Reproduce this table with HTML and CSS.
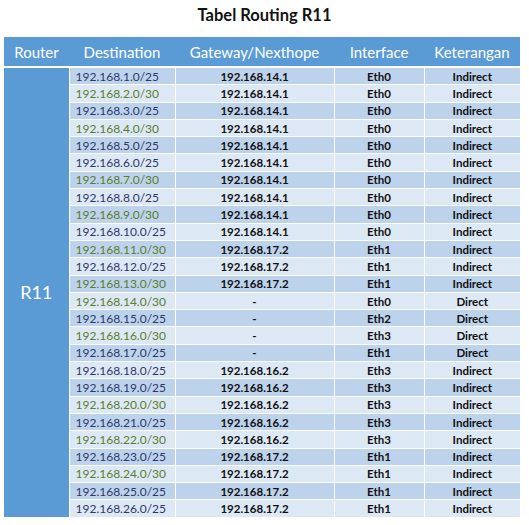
FILE: index.html
```html
<!DOCTYPE html>
<html>
<head>
<meta charset="utf-8">
<link rel="stylesheet" href="styles.css">
</head>
<body>
<h1 class="title">Tabel Routing R11</h1>
<table class="rt">
<colgroup>
<col class="c1"><col class="c2"><col class="c3"><col class="c4"><col class="c5">
</colgroup>
<thead>
<tr><th>Router</th><th>Destination</th><th>Gateway/Nexthope</th><th>Interface</th><th>Keterangan</th></tr>
</thead>
<tbody>
<tr class="d"><td class="router" rowspan="26">R11</td><td class="dst n">192.168.1.0/25</td><td>192.168.14.1</td><td>Eth0</td><td>Indirect</td></tr>
<tr class="l"><td class="dst g">192.168.2.0/30</td><td>192.168.14.1</td><td>Eth0</td><td>Indirect</td></tr>
<tr class="d"><td class="dst n">192.168.3.0/25</td><td>192.168.14.1</td><td>Eth0</td><td>Indirect</td></tr>
<tr class="l"><td class="dst g">192.168.4.0/30</td><td>192.168.14.1</td><td>Eth0</td><td>Indirect</td></tr>
<tr class="d"><td class="dst n">192.168.5.0/25</td><td>192.168.14.1</td><td>Eth0</td><td>Indirect</td></tr>
<tr class="l"><td class="dst n">192.168.6.0/25</td><td>192.168.14.1</td><td>Eth0</td><td>Indirect</td></tr>
<tr class="d"><td class="dst g">192.168.7.0/30</td><td>192.168.14.1</td><td>Eth0</td><td>Indirect</td></tr>
<tr class="l"><td class="dst n">192.168.8.0/25</td><td>192.168.14.1</td><td>Eth0</td><td>Indirect</td></tr>
<tr class="d"><td class="dst g">192.168.9.0/30</td><td>192.168.14.1</td><td>Eth0</td><td>Indirect</td></tr>
<tr class="l"><td class="dst n">192.168.10.0/25</td><td>192.168.14.1</td><td>Eth0</td><td>Indirect</td></tr>
<tr class="d"><td class="dst g">192.168.11.0/30</td><td>192.168.17.2</td><td>Eth1</td><td>Indirect</td></tr>
<tr class="l"><td class="dst n">192.168.12.0/25</td><td>192.168.17.2</td><td>Eth1</td><td>Indirect</td></tr>
<tr class="d"><td class="dst g">192.168.13.0/30</td><td>192.168.17.2</td><td>Eth1</td><td>Indirect</td></tr>
<tr class="l"><td class="dst g">192.168.14.0/30</td><td>-</td><td>Eth0</td><td class="direct">Direct</td></tr>
<tr class="d"><td class="dst n">192.168.15.0/25</td><td>-</td><td>Eth2</td><td class="direct">Direct</td></tr>
<tr class="l"><td class="dst g">192.168.16.0/30</td><td>-</td><td>Eth3</td><td class="direct">Direct</td></tr>
<tr class="d"><td class="dst n">192.168.17.0/25</td><td>-</td><td>Eth1</td><td class="direct">Direct</td></tr>
<tr class="l"><td class="dst n">192.168.18.0/25</td><td>192.168.16.2</td><td>Eth3</td><td>Indirect</td></tr>
<tr class="d"><td class="dst n">192.168.19.0/25</td><td>192.168.16.2</td><td>Eth3</td><td>Indirect</td></tr>
<tr class="l"><td class="dst g">192.168.20.0/30</td><td>192.168.16.2</td><td>Eth3</td><td>Indirect</td></tr>
<tr class="d"><td class="dst n">192.168.21.0/25</td><td>192.168.16.2</td><td>Eth3</td><td>Indirect</td></tr>
<tr class="l"><td class="dst g">192.168.22.0/30</td><td>192.168.16.2</td><td>Eth3</td><td>Indirect</td></tr>
<tr class="d"><td class="dst n">192.168.23.0/25</td><td>192.168.17.2</td><td>Eth1</td><td>Indirect</td></tr>
<tr class="l"><td class="dst g">192.168.24.0/30</td><td>192.168.17.2</td><td>Eth1</td><td>Indirect</td></tr>
<tr class="d"><td class="dst n">192.168.25.0/25</td><td>192.168.17.2</td><td>Eth1</td><td>Indirect</td></tr>
<tr class="l"><td class="dst n">192.168.26.0/25</td><td>192.168.17.2</td><td>Eth1</td><td>Indirect</td></tr>
</tbody>
</table>
</body>
</html>
```
FILE: styles.css
```css
html, body {
  margin: 0;
  padding: 0;
  background: #fff;
}
body {
  padding: 4px 4px 0 4px;
  font-family: Lato, "Liberation Sans", sans-serif;
}
.title {
  margin: 0;
  height: 33px;
  line-height: 22px;
  font-size: 16.5px;
  font-weight: 700;
  text-align: center;
  color: #111;
}
.rt {
  width: 516px;
  border-collapse: collapse;
  table-layout: fixed;
}
.c1 { width: 65px; }
.c2 { width: 106px; }
.c3 { width: 159px; }
.c4 { width: 90px; }
.c5 { width: 96px; }
.rt th {
  background: #5b9bd5;
  color: #fff;
  font-weight: 400;
  font-size: 15px;
  height: 29px;
  padding: 0;
  border: 0;
  border-bottom: 2px solid #fff;
}
.rt td {
  height: 16.3px;
  padding: 0;
  border: 1px solid #fff;
  text-align: center;
  font-size: 11.5px;
  font-weight: 700;
  color: #111;
  line-height: 15px;
}
.rt tr.d td { background: #bdd3ec; }
.rt tr.l td { background: #dde8f5; }
.rt td.router {
  background: #5b9bd5 !important;
  color: #fff;
  font-size: 18px;
  font-weight: 400;
  border-left: 0;
  border-bottom: 0;
}
.rt td.dst {
  text-align: left;
  padding-left: 6px;
  font-size: 12px;
  font-weight: 400;
}
.rt td.n { color: #2e3769; }
.rt td.g { color: #5b7d2a; }
.rt td:last-child { border-right: 0; }
.rt tr:last-child td { border-bottom: 0; }
```
